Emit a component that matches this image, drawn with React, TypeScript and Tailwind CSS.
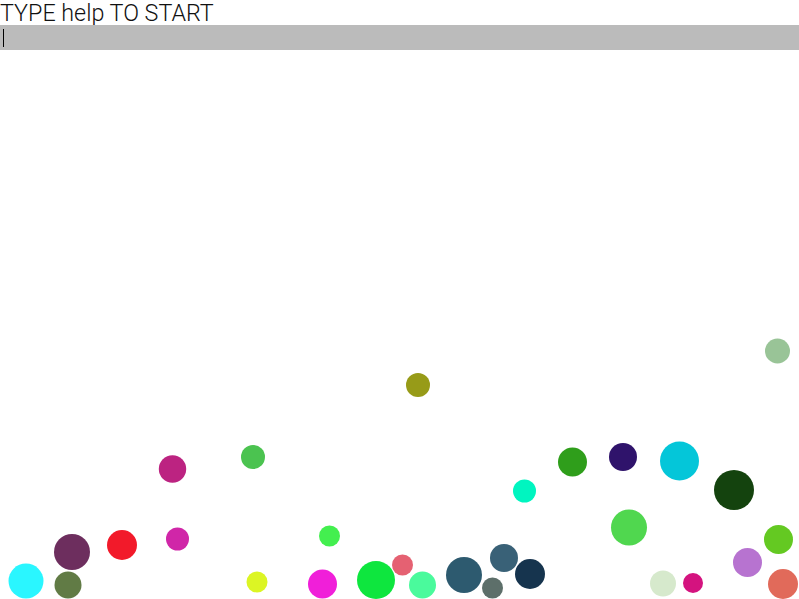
import React from 'react';

type Ball = { x: number; y: number; r: number; color: string };

// page coordinates; the canvas starts below the 50px header
const balls: Ball[] = [
  { x: 26, y: 581, r: 17.5, color: '#2af6ff' },
  { x: 72, y: 552, r: 18, color: '#6d2e5e' },
  { x: 68, y: 585, r: 13.5, color: '#617b45' },
  { x: 122, y: 545, r: 15, color: '#f21a2a' },
  { x: 177.5, y: 539, r: 11.5, color: '#d026a8' },
  { x: 172.5, y: 469, r: 13.7, color: '#bc2381' },
  { x: 253, y: 457, r: 12, color: '#4bc350' },
  { x: 257, y: 582, r: 10.5, color: '#dcf524' },
  { x: 418, y: 385, r: 12, color: '#979b18' },
  { x: 524.5, y: 491, r: 11.5, color: '#00f5c0' },
  { x: 329.5, y: 536, r: 10.5, color: '#43ef4f' },
  { x: 322.5, y: 584, r: 14.5, color: '#f01fd9' },
  { x: 376, y: 580, r: 19, color: '#0ee63e' },
  { x: 402.5, y: 565, r: 10.5, color: '#e56172' },
  { x: 422.5, y: 585, r: 13.5, color: '#4afa9c' },
  { x: 464, y: 575, r: 18, color: '#2d5a6f' },
  { x: 504, y: 558, r: 14, color: '#396177' },
  { x: 492.5, y: 588, r: 10.5, color: '#5d6f6a' },
  { x: 530, y: 574, r: 15, color: '#16344e' },
  { x: 777.5, y: 351, r: 12.5, color: '#99c497' },
  { x: 572.5, y: 462, r: 14.5, color: '#2f9e1b' },
  { x: 623, y: 457, r: 14, color: '#2f136b' },
  { x: 679.5, y: 461, r: 19.5, color: '#04c6d9' },
  { x: 734, y: 490, r: 20, color: '#14430e' },
  { x: 629, y: 527.5, r: 18, color: '#50d74f' },
  { x: 778.5, y: 539.5, r: 14.5, color: '#64c922' },
  { x: 747.5, y: 562.5, r: 14.5, color: '#b773d0' },
  { x: 783, y: 584, r: 15, color: '#e16a5a' },
  { x: 663, y: 583.5, r: 13, color: '#d6e9cc' },
  { x: 693, y: 583, r: 10, color: '#d4137f' },
];

export default function App() {
  return (
    <div className="w-[799px] h-[599px] flex flex-col overflow-hidden bg-white font-['Roboto',sans-serif]">
      <div className="h-[25px] pt-px text-[23.3px] leading-[24px] font-light text-[#111] whitespace-nowrap">
        TYPE help TO START
      </div>
      <div className="h-[25px] bg-[#bbbbbb] flex items-center px-[3px]">
        <span className="w-px h-[18px] bg-black" />
      </div>
      <div className="flex-1">
        <svg width="799" height="549" viewBox="0 0 799 549">
          {balls.map((b, i) => (
            <circle key={i} cx={b.x} cy={b.y - 50} r={b.r} fill={b.color} />
          ))}
        </svg>
      </div>
    </div>
  );
}
